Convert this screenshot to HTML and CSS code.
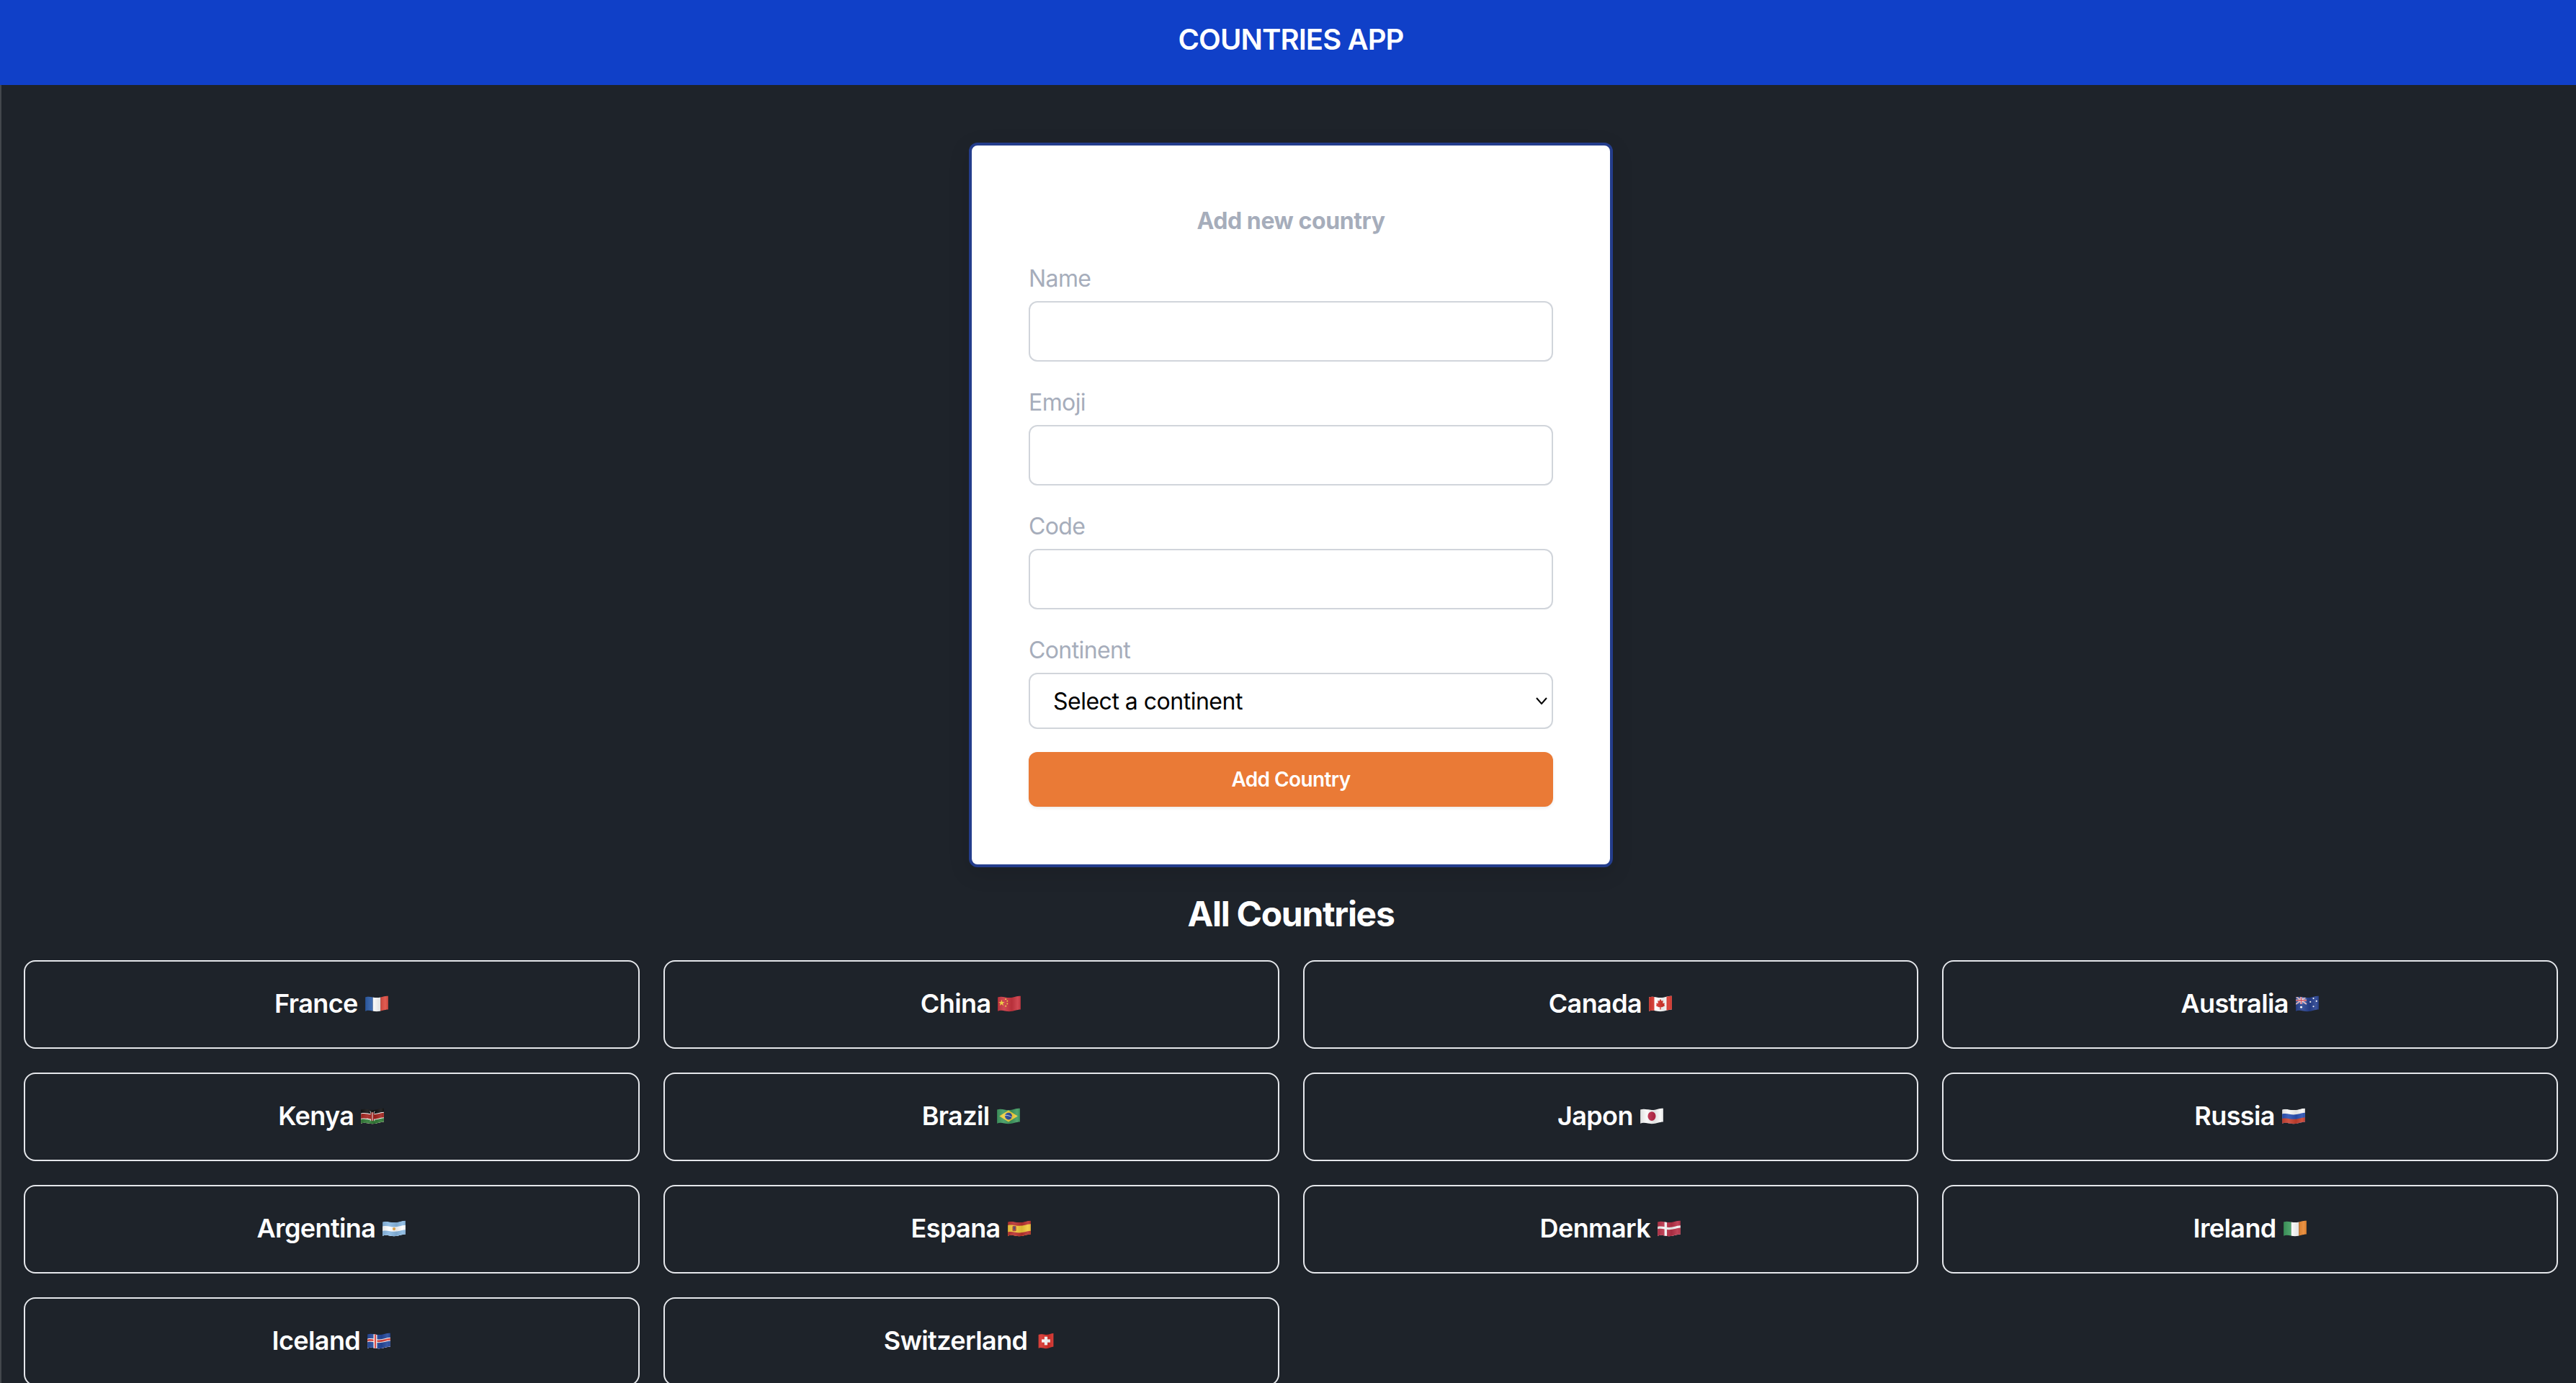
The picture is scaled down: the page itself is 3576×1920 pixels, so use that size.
FILE: index.html
```html
<!DOCTYPE html>
<html>
<head>
    <title>Countries App</title>
    <link rel="stylesheet" href="styles.css">
</head>
<body>
    <svg class="flag-defs">
        <defs>
            <clipPath id="wave"><path d="M1 4C6 2 11 4.5 16 4.5C22 4.5 26 2 31 2V20C26 20 22 22.5 16 22.5C11 22.5 6 20 1 22Z"/></clipPath>
            <clipPath id="wave-narrow"><path d="M6 4.5C10 3 13 4.5 16 4.5C20 4.5 23 2.5 26 2.5V20C23 20 20 22.5 16 22.5C13 22.5 10 20.5 6 22Z"/></clipPath>
            <linearGradient id="shade" x1="0" x2="1" y1="0" y2="0">
                <stop offset="0" stop-color="#000" stop-opacity=".12"/>
                <stop offset=".3" stop-color="#fff" stop-opacity=".1"/>
                <stop offset=".6" stop-color="#000" stop-opacity=".1"/>
                <stop offset=".85" stop-color="#fff" stop-opacity=".1"/>
                <stop offset="1" stop-color="#000" stop-opacity=".1"/>
            </linearGradient>
            <path id="wv" d="M0 0C6-2 11 .5 16 .5C22 .5 26-2 32-2V40H0Z"/>
            <rect id="sh" width="32" height="24" fill="url(#shade)"/>
        </defs>
        <symbol id="fr" viewBox="0 0 32 24"><g clip-path="url(#wave)">
            <rect width="11" height="24" fill="#2b5ca9"/><rect x="11" width="10" height="24" fill="#fff"/><rect x="21" width="11" height="24" fill="#dc4a3f"/><use href="#sh"/>
        </g></symbol>
        <symbol id="cn" viewBox="0 0 32 24"><g clip-path="url(#wave)">
            <rect width="32" height="24" fill="#cb3540"/>
            <polygon points="6,7 7,10 10,10 7.6,11.8 8.5,15 6,13 3.5,15 4.4,11.8 2,10 5,10" fill="#f6d43a"/>
            <circle cx="11.5" cy="6.5" r=".9" fill="#f6d43a"/><circle cx="13.5" cy="9" r=".9" fill="#f6d43a"/><circle cx="13.5" cy="12.5" r=".9" fill="#f6d43a"/><circle cx="11.5" cy="15.5" r=".9" fill="#f6d43a"/><use href="#sh"/>
        </g></symbol>
        <symbol id="ca" viewBox="0 0 32 24"><g clip-path="url(#wave)">
            <rect width="32" height="24" fill="#fff"/><rect width="8" height="24" fill="#d8352c"/><rect x="24" width="8" height="24" fill="#d8352c"/>
            <polygon points="16,6 17.5,9 19.5,8.2 19,12 21.5,11.5 21,14 22,15 18,17 16.6,17 16.6,20 15.4,20 15.4,17 14,17 10,15 11,14 10.5,11.5 13,12 12.5,8.2 14.5,9" fill="#d8352c"/><use href="#sh"/>
        </g></symbol>
        <symbol id="au" viewBox="0 0 32 24"><g clip-path="url(#wave)">
            <rect width="32" height="24" fill="#26408f"/>
            <rect x="1" y="3" width="14" height="10" fill="#33509f"/>
            <path d="M1 3L15 13M15 3L1 13" stroke="#fff" stroke-width="1.6"/><path d="M1 3L15 13M15 3L1 13" stroke="#c9384a" stroke-width=".6"/>
            <path d="M8 3V13M1 8H15" stroke="#fff" stroke-width="2.4"/><path d="M8 3V13M1 8H15" stroke="#c9384a" stroke-width="1.2"/>
            <circle cx="8" cy="17" r="1.4" fill="#fff"/><circle cx="24" cy="5.5" r="1" fill="#fff"/><circle cx="20" cy="10" r="1" fill="#fff"/><circle cx="28" cy="9" r="1" fill="#fff"/><circle cx="24" cy="16" r="1" fill="#fff"/><use href="#sh"/>
        </g></symbol>
        <symbol id="ke" viewBox="0 0 32 24"><g clip-path="url(#wave)">
            <use href="#wv" y="0" fill="#111"/><use href="#wv" y="9" fill="#fff"/><use href="#wv" y="10" fill="#a3231d"/><use href="#wv" y="16" fill="#fff"/><use href="#wv" y="17" fill="#2f7a35"/>
            <path d="M13 6L19 19M19 6L13 19" stroke="#fff" stroke-width=".8"/><ellipse cx="16" cy="13" rx="2.6" ry="6" fill="#a3231d"/><path d="M16 7.5V18.5" stroke="#fff" stroke-width=".9"/><use href="#sh"/>
        </g></symbol>
        <symbol id="br" viewBox="0 0 32 24"><g clip-path="url(#wave)">
            <rect width="32" height="24" fill="#3f9a60"/><polygon points="16,5 28,12.5 16,20 4,12.5" fill="#f0cf3c"/><circle cx="16" cy="12.5" r="4.6" fill="#2d4b9b"/><path d="M11.5 11.5C14 11 18 12 20.5 14" stroke="#fff" stroke-width=".7" fill="none"/><use href="#sh"/>
        </g></symbol>
        <symbol id="jp" viewBox="0 0 32 24"><g clip-path="url(#wave)">
            <rect width="32" height="24" fill="#f8f8f8"/><ellipse cx="16" cy="12.5" rx="5.2" ry="6" fill="#bd2a4a"/><use href="#sh"/>
        </g></symbol>
        <symbol id="ru" viewBox="0 0 32 24"><g clip-path="url(#wave)">
            <use href="#wv" y="4" fill="#f8f8f8"/><use href="#wv" y="10" fill="#2a50b4"/><use href="#wv" y="16" fill="#c9402f"/><use href="#sh"/>
        </g></symbol>
        <symbol id="ar" viewBox="0 0 32 24"><g clip-path="url(#wave)">
            <use href="#wv" y="4" fill="#8ab9e3"/><use href="#wv" y="10" fill="#fff"/><use href="#wv" y="16" fill="#8ab9e3"/><circle cx="16" cy="13" r="2" fill="#e9a94a"/><use href="#sh"/>
        </g></symbol>
        <symbol id="es" viewBox="0 0 32 24"><g clip-path="url(#wave)">
            <use href="#wv" y="4" fill="#b9302f"/><use href="#wv" y="8.5" fill="#f2c83a"/><use href="#wv" y="17.5" fill="#b9302f"/><rect x="7" y="9" width="5" height="7" rx="1.5" fill="#a8432c"/><rect x="8.5" y="10" width="2" height="4" fill="#3f3f6e"/><use href="#sh"/>
        </g></symbol>
        <symbol id="dk" viewBox="0 0 32 24"><g clip-path="url(#wave)">
            <rect width="32" height="24" fill="#b93148"/><use href="#wv" y="10.5" fill="#f4f4f4"/><use href="#wv" y="13.5" fill="#b93148"/><rect x="10" width="3.2" height="24" fill="#f4f4f4"/><use href="#sh"/>
        </g></symbol>
        <symbol id="ie" viewBox="0 0 32 24"><g clip-path="url(#wave)">
            <rect width="11" height="24" fill="#3c9a5c"/><rect x="11" width="10" height="24" fill="#fff"/><rect x="21" width="11" height="24" fill="#e8862f"/><use href="#sh"/>
        </g></symbol>
        <symbol id="is" viewBox="0 0 32 24"><g clip-path="url(#wave)">
            <rect width="32" height="24" fill="#24489c"/><use href="#wv" y="10" fill="#fff"/><use href="#wv" y="11" fill="#d9403c"/><use href="#wv" y="13.5" fill="#fff"/><use href="#wv" y="14.5" fill="#24489c"/>
            <rect x="9" width="4.6" height="24" fill="#fff"/><rect x="10.2" width="2.2" height="24" fill="#d9403c"/><use href="#sh"/>
        </g></symbol>
        <symbol id="ch" viewBox="0 0 32 24"><g clip-path="url(#wave-narrow)">
            <rect width="32" height="24" fill="#d7302a"/><rect x="14" y="7" width="4" height="11" fill="#fff"/><rect x="10.5" y="10.5" width="11" height="4" fill="#fff"/><use href="#sh"/>
        </g></symbol>
    </svg>

    <header class="navbar">COUNTRIES APP</header>

    <main class="content">
        <form class="country-form">
            <h2 class="form-title">Add new country</h2>

            <label class="field-label" for="name">Name</label>
            <input class="field-input" type="text" id="name">

            <label class="field-label" for="emoji">Emoji</label>
            <input class="field-input" type="text" id="emoji">

            <label class="field-label" for="code">Code</label>
            <input class="field-input" type="text" id="code">

            <label class="field-label" for="continent">Continent</label>
            <div class="select-wrap">
                <select class="field-select" id="continent">
                    <option>Select a continent</option>
                </select>
                <svg class="select-arrow" viewBox="0 0 16 10"><path d="M1 1L8 9L15 1" fill="none" stroke="#000" stroke-width="2"/></svg>
            </div>

            <button class="add-button" type="button">Add Country</button>
        </form>

        <h1 class="list-title">All Countries</h1>

        <div class="country-grid">
            <a class="country-card">France <svg class="flag"><use href="#fr"/></svg></a>
            <a class="country-card">China <svg class="flag"><use href="#cn"/></svg></a>
            <a class="country-card">Canada <svg class="flag"><use href="#ca"/></svg></a>
            <a class="country-card">Australia <svg class="flag"><use href="#au"/></svg></a>
            <a class="country-card">Kenya <svg class="flag"><use href="#ke"/></svg></a>
            <a class="country-card">Brazil <svg class="flag"><use href="#br"/></svg></a>
            <a class="country-card">Japon <svg class="flag"><use href="#jp"/></svg></a>
            <a class="country-card">Russia <svg class="flag"><use href="#ru"/></svg></a>
            <a class="country-card">Argentina <svg class="flag"><use href="#ar"/></svg></a>
            <a class="country-card">Espana <svg class="flag"><use href="#es"/></svg></a>
            <a class="country-card">Denmark <svg class="flag"><use href="#dk"/></svg></a>
            <a class="country-card">Ireland <svg class="flag"><use href="#ie"/></svg></a>
            <a class="country-card">Iceland <svg class="flag"><use href="#is"/></svg></a>
            <a class="country-card">Switzerland <svg class="flag"><use href="#ch"/></svg></a>
        </div>
    </main>
</body>
</html>
```

FILE: styles.css
```css
html, body {
    margin: 0;
    height: 100%;
    overflow: hidden;
}
body {
    width: 3584px;
    background-color: #1e232a;
    font-family: Inter, "Liberation Sans", sans-serif;
}
* {
    box-sizing: border-box;
}
.flag-defs {
    display: block;
    width: 0;
    height: 0;
}
.navbar {
    height: 118px;
    padding-top: 31px;
    background-color: #1040c8;
    color: #fff;
    font-size: 40px;
    font-weight: 600;
    letter-spacing: -0.9px;
    line-height: 48px;
    text-align: center;
}
.content {
    min-height: 1802px;
    padding: 80px 33px 0 31px;
    border-left: 2px solid #43474c;
}
.country-form {
    display: flex;
    flex-direction: column;
    width: 894px;
    margin: 0 auto;
    padding: 81px 79px 80px;
    background: #fff;
    border: 4px solid #243d8c;
    border-radius: 12px;
    box-shadow: 0 8px 30px rgba(0, 0, 0, 0.12);
}
.form-title {
    margin: 0 0 32px;
    color: #a6adbb;
    font-size: 32px;
    font-weight: 700;
    letter-spacing: -0.4px;
    line-height: 48px;
    text-align: center;
}
.field-label {
    margin-bottom: 7px;
    color: #a6adbb;
    font-size: 32px;
    letter-spacing: -0.6px;
    line-height: 48px;
}
.field-input {
    height: 84px;
    margin-bottom: 33px;
    border: 2px solid #d1d5db;
    border-radius: 12px;
    background: #fff;
}
.select-wrap {
    position: relative;
    margin-bottom: 32px;
}
.field-select {
    display: block;
    width: 100%;
    height: 78px;
    padding: 0 32px;
    appearance: none;
    border: 2px solid #d1d5db;
    border-radius: 12px;
    background: #fff;
    color: #000;
    font-family: inherit;
    font-size: 32px;
    letter-spacing: -0.5px;
}
.select-arrow {
    position: absolute;
    top: 34px;
    right: 8px;
    width: 16px;
    height: 10px;
}
.add-button {
    height: 76px;
    border: none;
    border-radius: 12px;
    background-color: #ea7a36;
    color: #fff;
    font-family: inherit;
    font-size: 28px;
    font-weight: 600;
    letter-spacing: -0.6px;
    box-shadow: 0 2px 4px rgba(0, 0, 0, 0.08);
}
.list-title {
    margin: 29px 0 28px;
    color: #fff;
    font-size: 48px;
    font-weight: 700;
    letter-spacing: -1.3px;
    line-height: 72px;
    text-align: center;
}
.country-grid {
    display: grid;
    grid-template-columns: repeat(4, 1fr);
    gap: 33px;
}
.country-card {
    display: flex;
    align-items: center;
    justify-content: center;
    gap: 9px;
    height: 123px;
    padding-bottom: 3px;
    border: 2px solid #e5e7eb;
    border-radius: 16px;
    color: #fff;
    font-size: 36px;
    font-weight: 600;
    letter-spacing: -0.6px;
}
.flag {
    width: 34px;
    height: 26px;
}
```
